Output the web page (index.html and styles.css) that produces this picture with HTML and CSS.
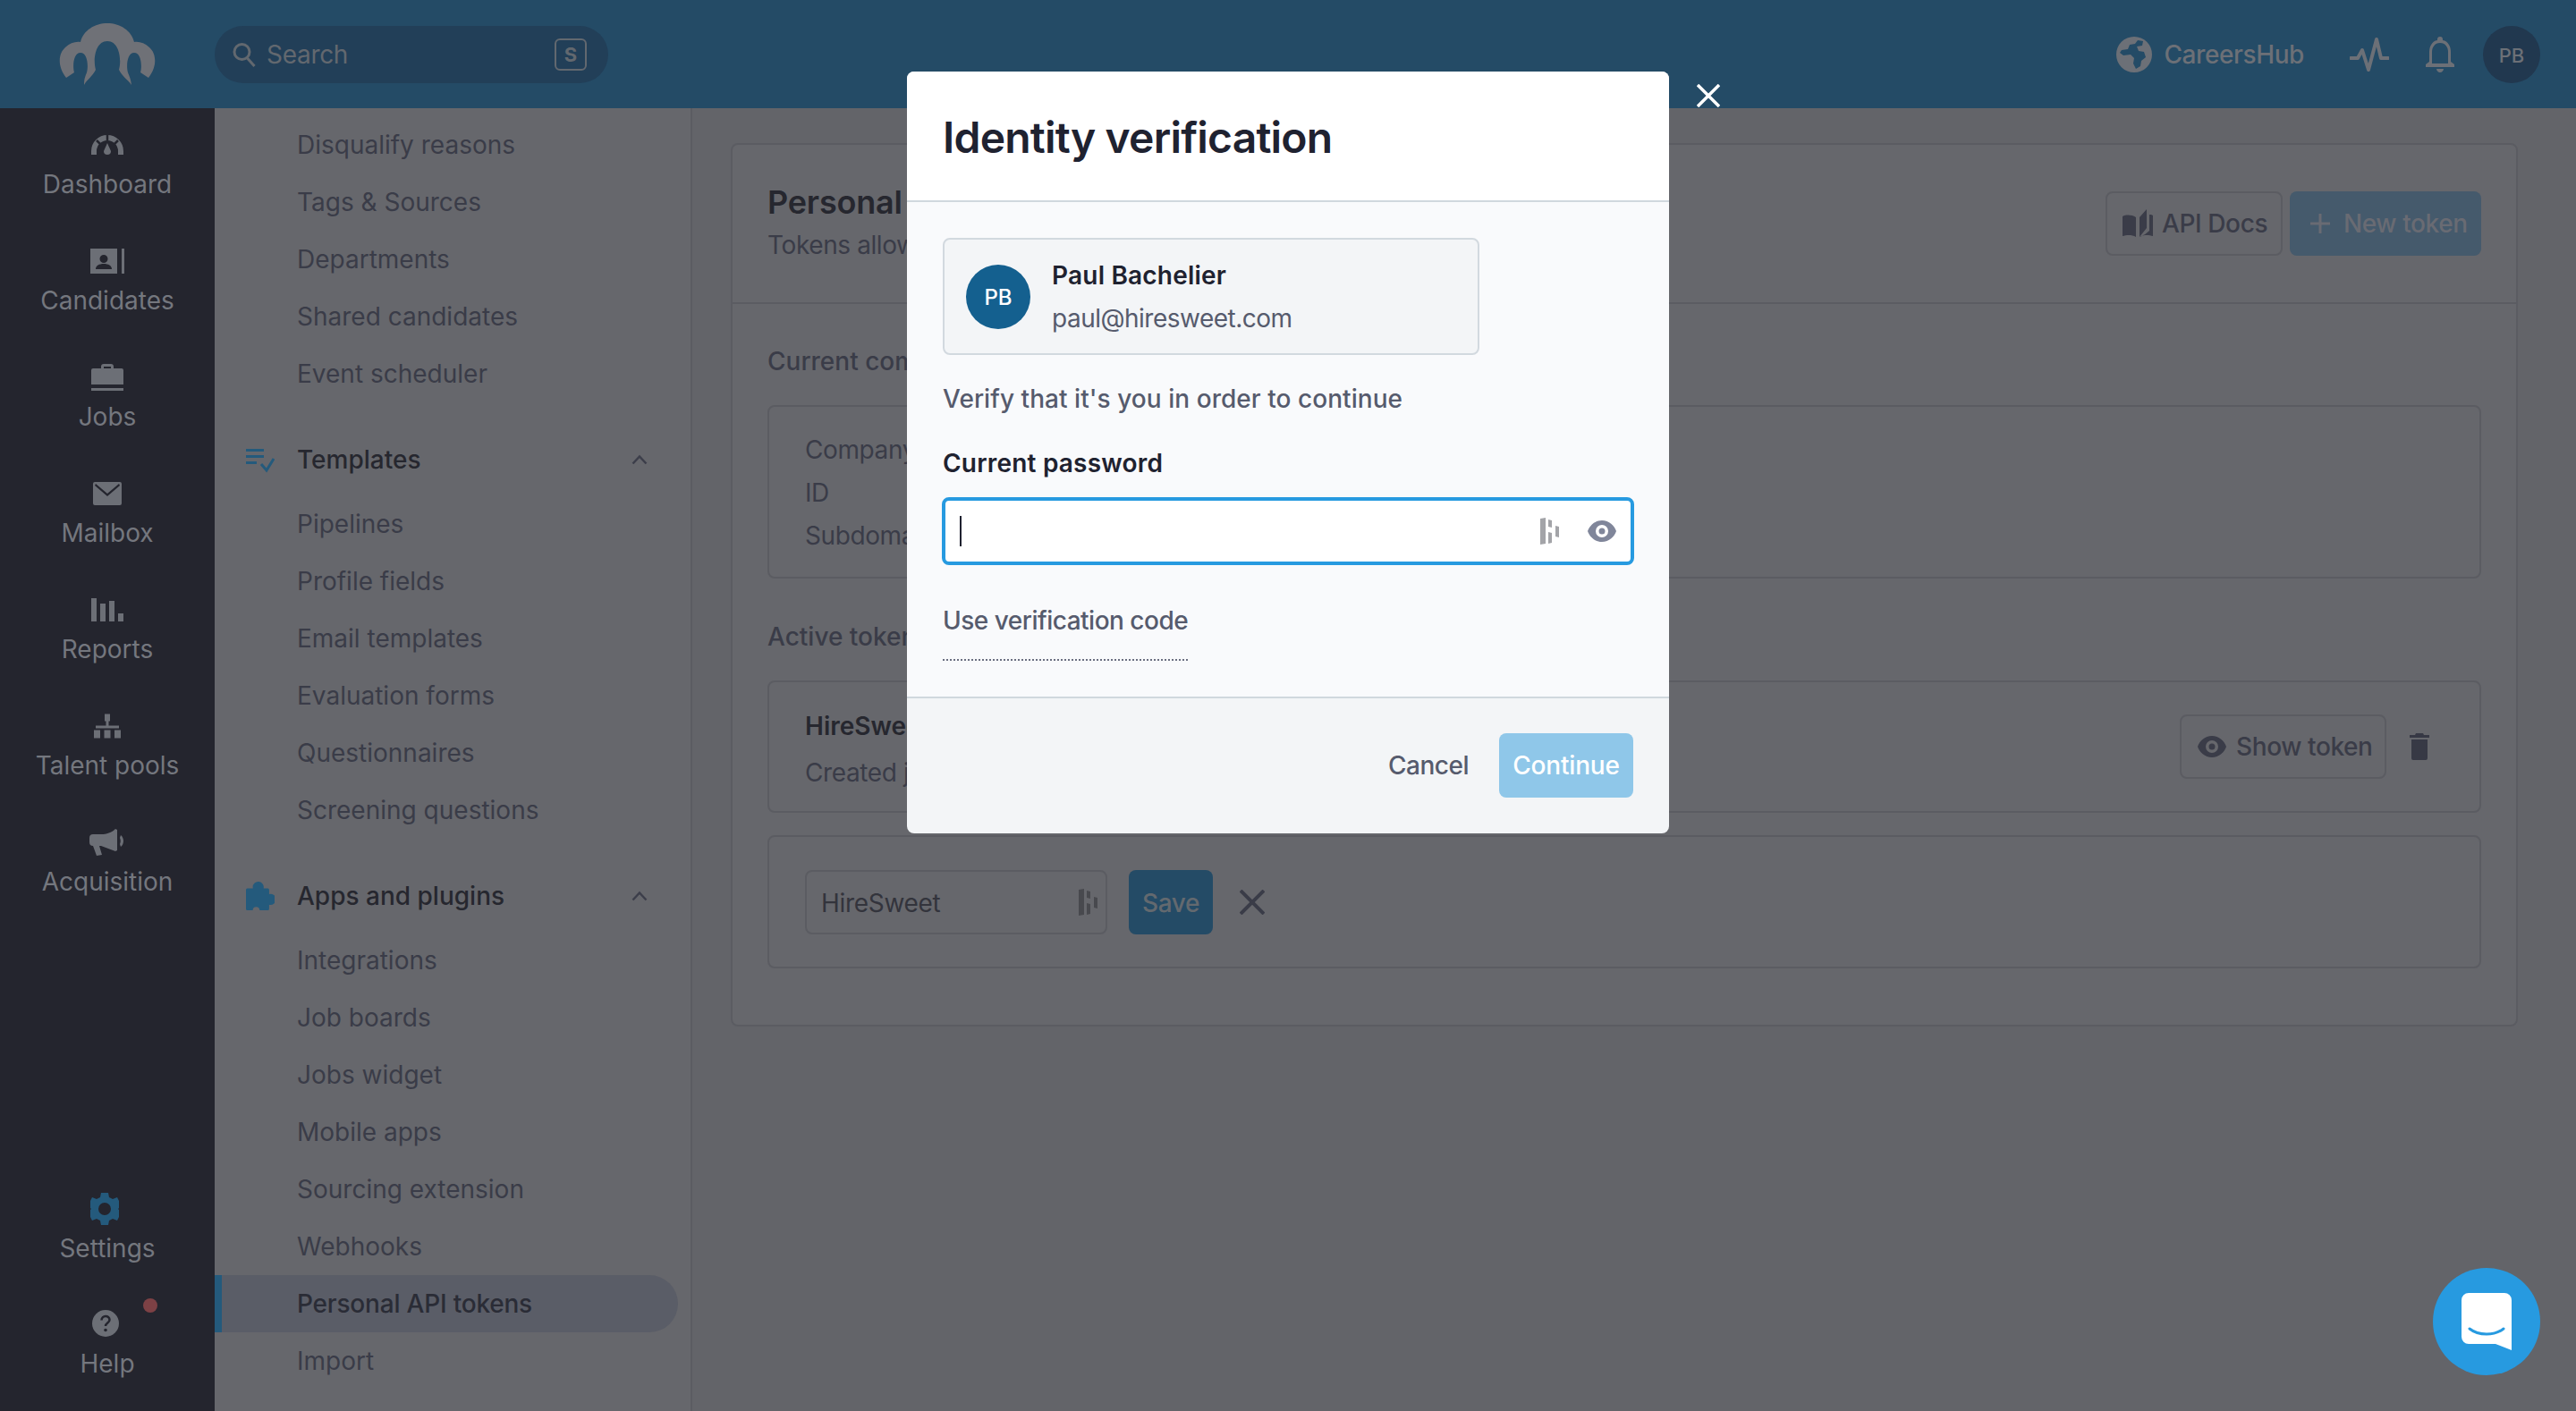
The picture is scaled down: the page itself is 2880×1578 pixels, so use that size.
FILE: index.html
```html
<!DOCTYPE html>
<html lang="en">
<head>
  <meta charset="UTF-8">
  <title>Personal API tokens</title>
  <link rel="stylesheet" href="styles.css">
</head>
<body>
  <!-- Top bar -->
  <header class="topbar">
    <svg class="logo" viewBox="0 0 108 70"><path d="M8 61C-2 48-1 34 7 27C12 22 19 20 24 21C27 8 40 0 54 0C68 0 81 8 84 21C89 20 96 22 101 27C109 34 110 48 100 61L91 55C93 48 92 33 84 33C76 33 75 48 77 55C78 58 80 61 81 69C76 62 71 60 67 52C70 42 68 20 54 20C40 20 38 42 41 52C37 60 32 62 28 69C28 61 30 58 31 55C33 48 32 33 24 33C16 33 15 48 17 55Z"/></svg>
    <div class="search">
      <svg class="search-icon" viewBox="0 0 26 28"><circle cx="10.5" cy="11" r="8.5"/><path d="M16.5 18l8 9"/></svg>
      <span class="search-text">Search</span>
      <span class="search-key">S</span>
    </div>
    <div class="topbar-right">
      <svg class="globe" viewBox="0 0 40 40"><path fill-rule="evenodd" d="M20 0a20 20 0 1 1 0 40a20 20 0 0 1 0-40zM24 4l-3 4-6 1-2 5-7 1-2 3 4 3 8-1 4 4-1 6 3 6 5-3 1-6 5-4-2-6-6-1-2-5 6-1 1-5z"/></svg>
      <span class="careers">CareersHub</span>
      <svg class="pulse" viewBox="0 0 44 38"><path d="M1 23h8l5-9 7 22 9-34 5 21h8"/></svg>
      <svg class="bell" viewBox="0 0 32 40"><path fill-rule="evenodd" d="M16 0a3 3 0 0 1 3 3v1c6 1 9 7 9 13v11l4 3v3H0v-3l4-3V17c0-6 3-12 9-13V3a3 3 0 0 1 3-3zM16 7c-6 0-9 5-9 10v13h18V17c0-5-3-10-9-10zM12 36h8c0 2-2 4-4 4s-4-2-4-4z"/></svg>
      <div class="top-avatar">PB</div>
    </div>
  </header>

  <div class="layout">
    <!-- Main nav -->
    <nav class="sidebar">
      <a class="nav-item">
        <svg class="nav-icon" viewBox="-2 -9 40 40"><path class="gauge" d="M3 22V18A15 15 0 0 1 33 18V22"/><path class="gauge-cut" d="M18 0V6M6 6L11 11M30 6L25 11"/><path d="M18 9l4 9a4 4 0 0 1-8 0z"/></svg>
        <span>Dashboard</span>
      </a>
      <a class="nav-item">
        <svg class="nav-icon" viewBox="-1 -6 40 40"><path fill-rule="evenodd" d="M0 0h30v28H0zM15 7a4.500 4.500 0 1 0 0 9a4.500 4.500 0 0 0 0-9zM6 23h18c0-4-4-6-9-6s-9 2-9 6z"/><path d="M35 0h3v28h-3z"/></svg>
        <span>Candidates</span>
      </a>
      <a class="nav-item">
        <svg class="nav-icon" viewBox="-2 -5 40 40"><path fill-rule="evenodd" d="M11 5V3a3 3 0 0 1 3-3h8a3 3 0 0 1 3 3v2h9a2 2 0 0 1 2 2v16H0V7a2 2 0 0 1 2-2zM14 3v2h8V3z"/><path d="M0 27h36v3H0z"/></svg>
        <span>Jobs</span>
      </a>
      <a class="nav-item">
        <svg class="nav-icon" viewBox="-4 -7 40 40"><path fill-rule="evenodd" d="M2 0h28a2 2 0 0 1 2 2v22a2 2 0 0 1-2 2H2a2 2 0 0 1-2-2V2a2 2 0 0 1 2-2zM3 2l13 11L29 2l1 2-14 12L2 4z"/></svg>
        <span>Mailbox</span>
      </a>
      <a class="nav-item">
        <svg class="nav-icon" viewBox="-2 -7 40 40"><path d="M0 0h6v26H0zM10 6h6v20h-6zM20 3h6v23h-6zM30 17h6v9h-6z"/></svg>
        <span>Reports</span>
      </a>
      <a class="nav-item">
        <svg class="nav-icon" viewBox="-5 -6.500 40 40"><path d="M12 0h6v8h-6zM0 18h7v9H0zM11.500 18h7v9h-7zM23 18h7v9h-7zM2 13h26v3H2zM13.500 8h3v6h-3z"/></svg>
        <span>Talent pools</span>
      </a>
      <a class="nav-item">
        <svg class="nav-icon" viewBox="0 -5 40 40"><path d="M29 0l2 1v23l-2 1-16-6h-2l3 10-6 1-4-11H4a4 4 0 0 1-4-4V10a4 4 0 0 1 4-4h9c6 0 12-2 16-6zM35 7c4 3 4 10 0 13l-1-3c1-2 1-5 0-7z"/></svg>
        <span>Acquisition</span>
      </a>
      <div class="nav-bottom">
        <a class="nav-item nav-settings">
          <svg class="nav-icon gear" viewBox="0 0 32 36"><path fill-rule="evenodd" d="M12 0h8l1 5 4 2 5-2 2 4v8l-1 1 1 1v8l-2 4-5-2-4 2-1 5h-8l-1-5-4-2-5 2-2-4v-8l1-1-1-1V9l2-4 5 2 4-2zM16 11a7 7 0 1 0 0 14a7 7 0 0 0 0-14z"/></svg>
          <span>Settings</span>
        </a>
        <a class="nav-item nav-help">
          <svg class="nav-icon help-icon" viewBox="0 0 30 30"><circle cx="15" cy="15" r="15"/><path class="help-mark" d="M10.500 11.500c0-6 9-6 9-.5 0 3.500-4.500 3.500-4.500 7"/><circle class="help-dot" cx="15" cy="22.500" r="1.800"/></svg>
          <span>Help</span>
          <i class="help-badge"></i>
        </a>
      </div>
    </nav>

    <!-- Settings nav -->
    <aside class="subnav">
      <a class="sub-item">Disqualify reasons</a>
      <a class="sub-item">Tags &amp; Sources</a>
      <a class="sub-item">Departments</a>
      <a class="sub-item">Shared candidates</a>
      <a class="sub-item">Event scheduler</a>

      <div class="sub-head">
        <svg class="sub-icon" viewBox="0 0 32 30"><path d="M0 3h20v3H0zM0 10h20v3H0zM0 17h12v3H0z"/><path class="check" d="M17 20l6 7 8-13"/></svg>
        <span>Templates</span>
        <svg class="chevron" viewBox="0 0 18 12"><path d="M1.500 10.500L9 2.500l7.500 8"/></svg>
      </div>
      <a class="sub-item">Pipelines</a>
      <a class="sub-item">Profile fields</a>
      <a class="sub-item">Email templates</a>
      <a class="sub-item">Evaluation forms</a>
      <a class="sub-item">Questionnaires</a>
      <a class="sub-item">Screening questions</a>

      <div class="sub-head">
        <svg class="sub-icon puzzle" viewBox="3 1 21 21"><path d="M8 5a4 4 0 1 1 7.874 1H19a1 1 0 0 1 1 1v3.126a4 4 0 1 1 0 7.748V21a1 1 0 0 1-1 1H4a1 1 0 0 1-1-1V7a1 1 0 0 1 1-1h4.126A4.007 4.007 0 0 1 8 5z"/><circle class="notch" cx="10.500" cy="22" r="2.500"/></svg>
        <span>Apps and plugins</span>
        <svg class="chevron" viewBox="0 0 18 12"><path d="M1.500 10.500L9 2.500l7.500 8"/></svg>
      </div>
      <a class="sub-item">Integrations</a>
      <a class="sub-item">Job boards</a>
      <a class="sub-item">Jobs widget</a>
      <a class="sub-item">Mobile apps</a>
      <a class="sub-item">Sourcing extension</a>
      <a class="sub-item">Webhooks</a>
      <a class="sub-item active">Personal API tokens</a>
      <a class="sub-item">Import</a>
    </aside>

    <!-- Page content -->
    <main class="content">
      <section class="card">
        <div class="card-header">
          <div>
            <h2 class="card-title">Personal API tokens</h2>
            <p class="card-sub">Tokens allow you to use the API</p>
          </div>
          <div class="card-actions">
            <button class="btn btn-ghost">
              <svg class="btn-icon book" viewBox="0 0 34 34"><path d="M0 9c4-2 10-2 15 1v22c-5-3-11-2-15-1zM19 10l8-9v21l-8 10z"/><path d="M30 7h2l2 1v23c-4-1-10-2-15 1 4-1 9-5 11-7z"/></svg>
              API Docs
            </button>
            <button class="btn btn-new">
              <svg class="btn-icon plus" viewBox="0 0 22 22"><path d="M11 0v22M0 11h22"/></svg>
              New token
            </button>
          </div>
        </div>
        <div class="card-body">
          <h3 class="section-title">Current company</h3>
          <div class="box info-box">
            <div>Company</div>
            <div>ID</div>
            <div>Subdomain</div>
          </div>
          <h3 class="section-title active-title">Active tokens</h3>
          <div class="box token-row">
            <div class="token-info">
              <div class="token-name">HireSweet</div>
              <div class="token-date">Created just now</div>
            </div>
            <div class="token-actions">
              <button class="btn btn-ghost btn-show">
                <svg class="btn-icon eye-dark" viewBox="0 0 32 24"><path fill-rule="evenodd" d="M16 0c8 0 14 6 16 12-2 6-8 12-16 12S2 18 0 12C2 6 8 0 16 0zM16 5a7 7 0 1 0 0 14a7 7 0 0 0 0-14zM16 8.500a3.500 3.500 0 1 1 0 7a3.500 3.500 0 0 1 0-7z"/></svg>
                Show token
              </button>
              <svg class="trash" viewBox="0 0 22 30"><path d="M7 0h8l1 2h6v3H0V2h6zM2 7h18v21a2 2 0 0 1-2 2H4a2 2 0 0 1-2-2z"/></svg>
            </div>
          </div>
          <div class="box edit-row">
            <div class="name-input">
              <span>HireSweet</span>
              <svg class="dash-icon dash-dark" viewBox="0 0 21 30"><path d="M0 1l6-1v29l-6 1zM9 2l4 1v8l-4-1zM9 16l4 1v11l-4 1zM17 9l4 1v12l-4-1z"/></svg>
            </div>
            <button class="btn btn-save">Save</button>
            <svg class="cancel-x" viewBox="0 0 28 28"><path d="M1 1l26 26M27 1L1 27"/></svg>
          </div>
        </div>
      </section>
    </main>
  </div>

  <!-- Identity modal -->
  <div class="modal">
    <svg class="modal-close" viewBox="0 0 26 26"><path d="M1 1l24 24M25 1L1 25"/></svg>
    <div class="modal-header">
      <h1>Identity verification</h1>
    </div>
    <div class="modal-body">
      <div class="user-box">
        <div class="user-avatar">PB</div>
        <div>
          <div class="user-name">Paul Bachelier</div>
          <div class="user-mail">paul@hiresweet.com</div>
        </div>
      </div>
      <p class="verify-text">Verify that it's you in order to continue</p>
      <label class="field-label">Current password</label>
      <div class="password-field">
        <i class="caret"></i>
        <svg class="dash-icon" viewBox="0 0 21 30"><path d="M0 1l6-1v29l-6 1zM9 2l4 1v8l-4-1zM9 16l4 1v11l-4 1zM17 9l4 1v12l-4-1z"/></svg>
        <svg class="eye" viewBox="0 0 32 24"><path fill-rule="evenodd" d="M16 0c8 0 14 6 16 12-2 6-8 12-16 12S2 18 0 12C2 6 8 0 16 0zM16 5a7 7 0 1 0 0 14a7 7 0 0 0 0-14zM16 8.500a3.500 3.500 0 1 1 0 7a3.500 3.500 0 0 1 0-7z"/></svg>
      </div>
      <a class="code-link">Use verification code</a>
    </div>
    <div class="modal-footer">
      <a class="cancel">Cancel</a>
      <button class="continue">Continue</button>
    </div>
  </div>

  <!-- Chat widget -->
  <div class="chat">
    <svg viewBox="0 0 56 64"><path d="M8 0h40a8 8 0 0 1 8 8v56l-18-7H8a8 8 0 0 1-8-8V8a8 8 0 0 1 8-8z"/><path class="smile" d="M9 40c10 8 28 8 38 0"/></svg>
  </div>
</body>
</html>
```

FILE: styles.css
```css
* {
  box-sizing: border-box;
}

html, body {
  height: 100%;
}

body {
  margin: 0;
  position: relative;
  overflow: hidden;
  font-family: Inter, "Liberation Sans", sans-serif;
  font-size: 28px;
  line-height: 48px;
  color: #3a3c48;
  background: #636469;
}

h1, h2, h3, p {
  margin: 0;
}

button {
  font-family: inherit;
}

/* Top bar */
.topbar {
  height: 121px;
  background: #244b66;
  display: flex;
  align-items: center;
}

.logo {
  width: 108px;
  height: 70px;
  margin: 0 66px 0 66px;
  fill: #6f7177;
}

.search {
  width: 440px;
  height: 64px;
  border-radius: 32px;
  background: #223f58;
  display: flex;
  align-items: center;
  padding: 0 24px 0 20px;
  color: #62686f;
}

.search-icon {
  width: 26px;
  height: 28px;
  fill: none;
  stroke: #62686f;
  stroke-width: 3;
}

.search-text {
  margin-left: 12px;
  flex: 1;
  letter-spacing: -0.3px;
}

.search-key {
  width: 36px;
  height: 36px;
  border: 2px solid #62686f;
  border-radius: 6px;
  font-size: 22px;
  line-height: 32px;
  font-weight: 700;
  text-align: center;
}

.topbar-right {
  margin-left: auto;
  display: flex;
  align-items: center;
  padding-right: 40px;
  color: #6c7077;
}

.globe {
  width: 40px;
  height: 40px;
  fill: #6c7077;
}

.careers {
  margin-left: 13px;
  font-weight: 500;
  letter-spacing: -0.4px;
}

.pulse {
  width: 44px;
  height: 38px;
  margin-left: 51px;
  fill: none;
  stroke: #6c7077;
  stroke-width: 4;
  stroke-linejoin: round;
  stroke-linecap: round;
}

.bell {
  width: 32px;
  height: 40px;
  margin-left: 41px;
  fill: #6c7077;
}

.top-avatar {
  width: 64px;
  height: 64px;
  border-radius: 50%;
  margin-left: 32px;
  background: #21384f;
  font-size: 22px;
  font-weight: 500;
  line-height: 66px;
  text-align: center;
}

/* Page columns */
.layout {
  height: 1457px;
  display: flex;
}

.sidebar {
  width: 240px;
  flex: none;
  background: #24252e;
  padding-top: 21px;
  display: flex;
  flex-direction: column;
}

.nav-item {
  height: 130px;
  position: relative;
  display: flex;
  flex-direction: column;
  align-items: center;
  color: #74777e;
  flex: none;
}

.nav-icon {
  height: 40px;
  width: 40px;
  flex: none;
  fill: #6c6f76;
}

.gauge {
  fill: none;
  stroke: #6c6f76;
  stroke-width: 6;
}

.gauge-cut {
  fill: none;
  stroke: #24252e;
  stroke-width: 2.5;
}

.nav-bottom {
  margin-top: auto;
  padding-bottom: 26px;
}

.nav-settings {
  height: 128px;
}

.gear {
  width: 34px;
  height: 40px;
  padding: 2px 0;
  margin-right: 6px;
  fill: #245a7c;
}

.nav-help {
  height: 92px;
}

.nav-help span {
  margin-top: 1px;
}

.help-icon {
  width: 32px;
  height: 40px;
  margin-right: 5px;
  padding: 5px 0;
}

.help-mark {
  fill: none;
  stroke: #24252e;
  stroke-width: 2.5;
}

.help-dot {
  fill: #24252e;
}

.help-badge {
  position: absolute;
  left: 160px;
  top: -8px;
  width: 16px;
  height: 16px;
  border-radius: 50%;
  background: #7d4145;
}

/* Settings nav */
.subnav {
  width: 534px;
  flex: none;
  background: #66676c;
  border-right: 2px solid #5b5c62;
  padding-top: 9px;
  overflow: hidden;
}

.sub-item {
  display: block;
  height: 64px;
  line-height: 64px;
  padding-left: 92px;
  color: #3a3c48;
}

.sub-item.active {
  margin-right: 14px;
  border-left: 8px solid #245a7c;
  border-radius: 0 32px 32px 0;
  background: #5a5d67;
  padding-left: 84px;
  color: #2a2c36;
  font-weight: 500;
  letter-spacing: -0.2px;
}

.sub-head {
  height: 64px;
  margin: 32px 0 8px;
  padding: 0 48px 0 35px;
  display: flex;
  align-items: center;
  color: #26272f;
  font-weight: 500;
}

.sub-icon {
  width: 32px;
  height: 30px;
  margin-right: 25px;
  fill: #245a7c;
}

.sub-icon .check {
  fill: none;
  stroke: #245a7c;
  stroke-width: 3;
}

.puzzle {
  height: 32px;
}

.puzzle .notch {
  fill: #66676c;
}

.chevron {
  width: 18px;
  height: 12px;
  margin-left: auto;
  fill: none;
  stroke: #3c3e4a;
  stroke-width: 2.5;
}

/* Main card */
.content {
  flex: 1;
  padding: 39px 65px 0 43px;
}

.card {
  height: 988px;
  border: 2px solid #5b5c62;
  border-radius: 8px;
  background: #66676c;
}

.card-header {
  height: 178px;
  border-bottom: 2px solid #5b5c62;
  padding: 0 39px;
  display: flex;
  align-items: center;
  justify-content: space-between;
}

.card-title {
  font-size: 36px;
  font-weight: 600;
  color: #26272f;
  letter-spacing: -0.2px;
}

.card-sub {
  letter-spacing: -0.4px;
}

.card-actions {
  display: flex;
  gap: 8px;
}

.btn {
  height: 72px;
  border-radius: 8px;
  font-size: 28px;
  font-weight: 500;
  letter-spacing: -0.4px;
  display: flex;
  align-items: center;
  padding: 0;
}

.btn-ghost {
  background: none;
  border: 2px solid #5b5c62;
  color: #3a3c48;
}

.card-actions .btn-ghost {
  width: 198px;
  padding-left: 17px;
}

.btn-icon {
  flex: none;
}

.book {
  width: 34px;
  height: 34px;
  margin-right: 10px;
  fill: #3a3c48;
}

.btn-new {
  width: 214px;
  border: 0;
  background: #455a6c;
  color: #696b73;
  padding-left: 23px;
}

.plus {
  width: 22px;
  height: 22px;
  margin-right: 15px;
  fill: none;
  stroke: #696b73;
  stroke-width: 3;
}

.card-body {
  padding: 40px 39px 0;
}

.section-title {
  font-size: 28px;
  font-weight: 500;
  color: #3a3c48;
}

.box {
  border: 2px solid #5b5c62;
  border-radius: 8px;
  margin-top: 25px;
}

.info-box {
  height: 194px;
  padding: 24px 40px 0;
  letter-spacing: -0.4px;
}

.active-title {
  margin-top: 41px;
}

.token-row {
  height: 148px;
  padding: 0 56px 0 40px;
  display: flex;
  align-items: center;
  justify-content: space-between;
}

.token-info {
  padding-top: 6px;
}

.token-name {
  font-weight: 600;
  color: #26272f;
  line-height: 52px;
}

.token-date {
  line-height: 52px;
  letter-spacing: -0.4px;
}

.token-actions {
  display: flex;
  align-items: center;
  gap: 26px;
}

.btn-show {
  width: 231px;
  padding-left: 18px;
}

.eye-dark {
  width: 32px;
  height: 24px;
  margin-right: 11px;
  fill: #3a3c48;
}

.trash {
  width: 22px;
  height: 30px;
  fill: #373945;
}

.edit-row {
  height: 149px;
  padding: 0 40px;
  display: flex;
  align-items: center;
}

.name-input {
  width: 338px;
  height: 72px;
  border: 2px solid #5b5c62;
  border-radius: 8px;
  padding: 0 9px 0 16px;
  display: flex;
  align-items: center;
  justify-content: space-between;
  color: #33343c;
  letter-spacing: -0.3px;
}

.name-input span {
  padding-top: 2px;
}

.dash-icon {
  width: 21px;
  height: 30px;
  fill: #a3a4a8;
}

.dash-dark {
  fill: #48494e;
}

.btn-save {
  width: 94px;
  margin-left: 24px;
  padding-top: 2px;
  border: 0;
  justify-content: center;
  background: #244b66;
  color: #63696f;
}

.cancel-x {
  width: 28px;
  height: 28px;
  margin-left: 30px;
  fill: none;
  stroke: #3a3c48;
  stroke-width: 4;
}

/* Modal */
.modal {
  position: absolute;
  left: 1014px;
  top: 80px;
  width: 852px;
  height: 852px;
  border-radius: 8px;
  background: #f3f5f7;
  display: flex;
  flex-direction: column;
}

.modal-close {
  position: absolute;
  left: 883px;
  top: 14px;
  width: 26px;
  height: 26px;
  fill: none;
  stroke: #fff;
  stroke-width: 3.5;
}

.modal-header {
  height: 146px;
  padding: 40px 40px 0;
  border-bottom: 2px solid #d0d8de;
  background: #fff;
  border-radius: 8px 8px 0 0;
}

.modal-header h1 {
  font-size: 48px;
  line-height: 68px;
  font-weight: 600;
  letter-spacing: -0.8px;
  color: #1f2230;
}

.modal-body {
  height: 553px;
  padding: 40px 40px 0;
  background: #f9fafc;
}

.user-box {
  width: 600px;
  height: 131px;
  border: 2px solid #d2d9df;
  border-radius: 8px;
  background: #f3f5f7;
  padding: 0 24px;
  display: flex;
  align-items: center;
  gap: 24px;
}

.user-avatar {
  width: 72px;
  height: 72px;
  border-radius: 50%;
  background: #14608f;
  color: #fff;
  font-size: 24px;
  font-weight: 500;
  line-height: 74px;
  text-align: center;
}

.user-name {
  font-weight: 600;
  color: #1f2230;
  letter-spacing: 0.2px;
}

.user-mail {
  color: #565b6d;
  letter-spacing: -0.5px;
}

.verify-text {
  margin-top: 25px;
  color: #565b6d;
  font-weight: 500;
  letter-spacing: 0.05px;
}

.field-label {
  display: block;
  margin-top: 24px;
  color: #1f2230;
  font-weight: 600;
  letter-spacing: 0.2px;
}

.password-field {
  width: 774px;
  height: 76px;
  margin: 14px 0 0 -1px;
  border: 4px solid #279ae0;
  border-radius: 8px;
  background: #fff;
  padding: 0 16px 0 16px;
  display: flex;
  align-items: center;
}

.caret {
  width: 2px;
  height: 34px;
  background: #1f2230;
}

.password-field .dash-icon {
  margin-left: auto;
}

.eye {
  width: 32px;
  height: 24px;
  margin-left: 32px;
  fill: #80869a;
}

.code-link {
  display: inline-block;
  margin-top: 38px;
  padding-bottom: 19px;
  border-bottom: 2px dotted #6a6e80;
  color: #565b6d;
  font-weight: 500;
  letter-spacing: -0.5px;
}

.modal-footer {
  flex: 1;
  border-top: 2px solid #d0d8de;
  padding: 39px 40px 0;
  display: flex;
  justify-content: flex-end;
  gap: 34px;
  border-radius: 0 0 8px 8px;
}

.cancel {
  line-height: 72px;
  color: #565b6d;
  font-weight: 500;
  letter-spacing: -0.5px;
}

.continue {
  width: 150px;
  height: 72px;
  border: 0;
  border-radius: 8px;
  background: #8fc7e9;
  color: #fff;
  font-size: 28px;
  font-weight: 500;
  letter-spacing: -0.2px;
}

/* Chat widget */
.chat {
  position: absolute;
  left: 2720px;
  top: 1418px;
  width: 120px;
  height: 120px;
  border-radius: 50%;
  background: #279ae0;
  display: flex;
  align-items: center;
  justify-content: center;
}

.chat svg {
  width: 56px;
  height: 64px;
  fill: #fff;
}

.chat .smile {
  fill: none;
  stroke: #279ae0;
  stroke-width: 3;
  stroke-linecap: round;
}
```
